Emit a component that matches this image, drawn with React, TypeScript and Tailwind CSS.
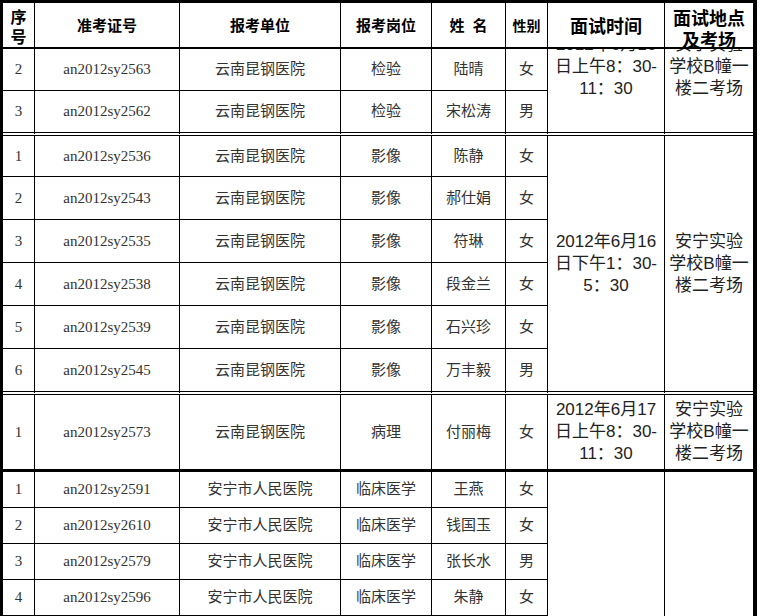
type Row = {
  no: string;
  id: string;
  unit: string;
  post: string;
  name: string;
  sex: string;
};

type Group = {
  rows: Row[];
  heights: string[];
  time: string[];
  place: string[];
  edge: "double" | "thick" | "thin";
  clipped?: boolean;
  tail?: boolean;
};

const kunming = "云南昆钢医院";
const anning = "安宁市人民医院";
const place = ["安宁实验", "学校B幢一", "楼二考场"];

const groups: Group[] = [
  {
    rows: [
      { no: "2", id: "an2012sy2563", unit: kunming, post: "检验", name: "陆晴", sex: "女" },
      { no: "3", id: "an2012sy2562", unit: kunming, post: "检验", name: "宋松涛", sex: "男" },
    ],
    heights: ["h-[42px]", "h-[45px]"],
    time: ["2012年6月16", "日上午8：30-", "11：30"],
    place,
    edge: "double",
    clipped: true,
  },
  {
    rows: [
      { no: "1", id: "an2012sy2536", unit: kunming, post: "影像", name: "陈静", sex: "女" },
      { no: "2", id: "an2012sy2543", unit: kunming, post: "影像", name: "郝仕娟", sex: "女" },
      { no: "3", id: "an2012sy2535", unit: kunming, post: "影像", name: "符琳", sex: "女" },
      { no: "4", id: "an2012sy2538", unit: kunming, post: "影像", name: "段金兰", sex: "女" },
      { no: "5", id: "an2012sy2539", unit: kunming, post: "影像", name: "石兴珍", sex: "女" },
      { no: "6", id: "an2012sy2545", unit: kunming, post: "影像", name: "万丰毅", sex: "男" },
    ],
    heights: ["h-[41px]", "h-[43px]", "h-[43px]", "h-[43px]", "h-[43px]", "h-[46px]"],
    time: ["2012年6月16", "日下午1：30-", "5：30"],
    place,
    edge: "double",
  },
  {
    rows: [{ no: "1", id: "an2012sy2573", unit: kunming, post: "病理", name: "付丽梅", sex: "女" }],
    heights: ["h-[77px]"],
    time: ["2012年6月17", "日上午8：30-", "11：30"],
    place,
    edge: "thick",
  },
  {
    rows: [
      { no: "1", id: "an2012sy2591", unit: anning, post: "临床医学", name: "王燕", sex: "女" },
      { no: "2", id: "an2012sy2610", unit: anning, post: "临床医学", name: "钱国玉", sex: "女" },
      { no: "3", id: "an2012sy2579", unit: anning, post: "临床医学", name: "张长水", sex: "男" },
      { no: "4", id: "an2012sy2596", unit: anning, post: "临床医学", name: "朱静", sex: "女" },
    ],
    heights: ["h-[36px]", "h-[36px]", "h-[36px]", "h-[36px]"],
    time: [],
    place: [],
    edge: "thin",
    tail: true,
  },
];

const edgeClass = {
  double: "border-b-4 border-double",
  thick: "border-b-[3px]",
  thin: "border-b",
};

const cell = "p-0 border-r border-black text-center align-middle";
const data =
  "font-['Liberation_Serif','Noto_Sans_CJK_SC',serif] text-[15px] text-[#333]";
const merged =
  "font-['Liberation_Sans','Noto_Sans_CJK_SC',sans-serif] text-[17px] leading-[22px] text-[#222]";
const head =
  "p-0 border-r border-b-2 border-black text-center align-middle font-['Noto_Sans_CJK_SC',sans-serif] font-bold text-black";

const Lines = ({ lines }: { lines: string[] }) => (
  <>
    {lines.map((l) => (
      <div key={l} className="whitespace-nowrap">
        {l}
      </div>
    ))}
  </>
);

const MergedCell = ({
  lines,
  span,
  edge,
  clipped,
  last,
}: {
  lines: string[];
  span: number;
  edge: string;
  clipped?: boolean;
  last?: boolean;
}) => (
  <td
    rowSpan={span}
    className={`${last ? "p-0 border-black text-center" : cell} ${edge} ${merged} ${
      clipped ? "align-top" : "align-middle"
    }`}
  >
    {clipped ? (
      <div className="h-[83px] overflow-hidden">
        <div className="-mt-[15px]">
          <Lines lines={lines} />
        </div>
      </div>
    ) : (
      <Lines lines={lines} />
    )}
  </td>
);

export default function App() {
  return (
    <div className="h-[616px] w-[761px] overflow-hidden bg-white">
      <div className="w-[757px] border-t-[3px] border-l-[3px] border-r-4 border-black">
        <table className="w-full table-fixed border-separate border-spacing-0">
          <thead>
            <tr>
              <th className={`${head} w-[32px] h-[46px] align-top text-[16px] leading-[20px]`}>
                <div className="h-[44px] overflow-hidden pt-[3px]">
                  <div>序</div>
                  <div>号</div>
                </div>
              </th>
              <th className={`${head} w-[145px] text-[15px]`}>准考证号</th>
              <th className={`${head} w-[161px] text-[15px]`}>报考单位</th>
              <th className={`${head} w-[91px] text-[15px]`}>报考岗位</th>
              <th className={`${head} w-[74px] text-[15px]`}>
                姓<span className="inline-block w-[8px]" />名
              </th>
              <th className={`${head} w-[42px] text-[14px]`}>性别</th>
              <th className={`${head} w-[117px] text-[18px]`}>面试时间</th>
              <th
                className={`p-0 border-b-2 border-black text-center align-top font-['Noto_Sans_CJK_SC',sans-serif] font-bold text-black w-[88px] text-[18px] leading-[22px]`}
              >
                <div className="h-[44px] overflow-hidden pt-[3px]">
                  <div>面试地点</div>
                  <div>及考场</div>
                </div>
              </th>
            </tr>
          </thead>
          <tbody>
            {groups.map((g, gi) => {
              const span = g.rows.length + (g.tail ? 1 : 0);
              const groupEdge = edgeClass[g.edge];
              return [
                ...g.rows.map((r, ri) => {
                  const isLast = ri === g.rows.length - 1 && !g.tail;
                  const b = isLast ? groupEdge : "border-b";
                  const c = `${cell} ${b} ${data}`;
                  return (
                    <tr key={`${gi}-${ri}`}>
                      <td className={`${c} ${g.heights[ri]}`}>{r.no}</td>
                      <td className={c}>{r.id}</td>
                      <td className={c}>{r.unit}</td>
                      <td className={c}>{r.post}</td>
                      <td className={c}>{r.name}</td>
                      <td className={c}>{r.sex}</td>
                      {ri === 0 && (
                        <>
                          <MergedCell
                            lines={g.time}
                            span={span}
                            edge={g.tail ? "" : groupEdge}
                            clipped={g.clipped}
                          />
                          <MergedCell
                            lines={g.place}
                            span={span}
                            edge={g.tail ? "" : groupEdge}
                            clipped={g.clipped}
                            last
                          />
                        </>
                      )}
                    </tr>
                  );
                }),
                g.tail ? (
                  <tr key={`${gi}-tail`}>
                    {[0, 1, 2, 3, 4, 5].map((k) => (
                      <td key={k} className={`${cell} border-b h-[36px]`} />
                    ))}
                  </tr>
                ) : null,
              ];
            })}
          </tbody>
        </table>
      </div>
    </div>
  );
}
